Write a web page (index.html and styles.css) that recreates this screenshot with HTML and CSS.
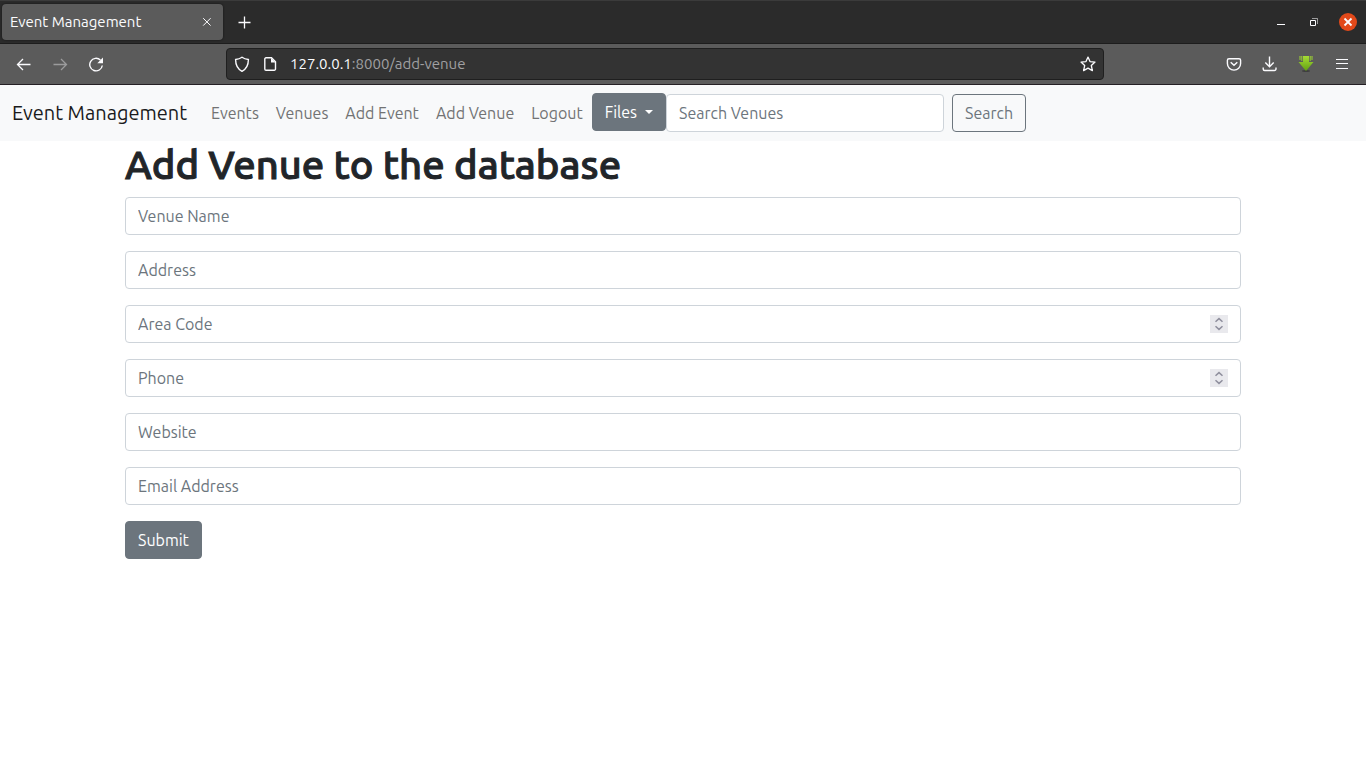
FILE: index.html
```html
<!DOCTYPE html>
<html lang="en">
<head>
<meta charset="utf-8">
<meta name="viewport" content="width=device-width, initial-scale=1">
<title>Event Management</title>
<link rel="stylesheet" href="styles.css">
</head>
<body>
<div class="browser">
  <div class="titlebar">
    <div class="tab">
      <span class="tab-title">Event Management</span>
      <button class="icon-btn tab-close" type="button" aria-label="Close tab">
        <svg width="16" height="16" viewBox="0 0 16 16"><path d="M4.2 4.2l7.4 7.4M11.6 4.2l-7.4 7.4"/></svg>
      </button>
    </div>
    <button class="icon-btn new-tab" type="button" aria-label="New tab">
      <svg width="16" height="16" viewBox="0 0 16 16"><path d="M8.5 2.5v12M2.5 8.5h12" stroke-width="1.300"/></svg>
    </button>
    <div class="window-controls">
      <button class="icon-btn" type="button" aria-label="Minimize">
        <svg width="16" height="16" viewBox="0 0 16 16"><path d="M4 10.5h8"/></svg>
      </button>
      <button class="icon-btn" type="button" aria-label="Restore">
        <svg width="16" height="16" viewBox="0 0 16 16"><path d="M4.5 6.5h5v5h-5z"/><path d="M6 4.5h5.500v5.500" opacity=".55"/></svg>
      </button>
      <button class="icon-btn window-close" type="button" aria-label="Close window">
        <svg width="18" height="18" viewBox="0 0 18 18"><path d="M5.500 5.500l7 7M12.500 5.500l-7 7" stroke-width="1.800"/></svg>
      </button>
    </div>
  </div>

  <div class="toolbar">
    <div class="history">
      <button class="icon-btn" type="button" aria-label="Back">
        <svg width="16" height="16" viewBox="0 0 16 16"><path d="M14.500 8.500H1.800M7 3L1.500 8.500 7 14" stroke-width="1.300"/></svg>
      </button>
      <button class="icon-btn dim" type="button" aria-label="Forward" disabled>
        <svg width="16" height="16" viewBox="0 0 16 16"><path d="M1.500 8.500h12.700M9 3l5.500 5.500L9 14" stroke-width="1.300"/></svg>
      </button>
      <button class="icon-btn" type="button" aria-label="Reload">
        <svg width="16" height="16" viewBox="0 0 16 16"><path d="M14.300 9.500A6.300 6.300 0 1 1 12.400 4" stroke-width="1.400"/><path class="solid" d="M15 1.500v5.800H9.300z"/></svg>
      </button>
    </div>
    <div class="urlbar">
      <svg width="16" height="16" viewBox="0 0 16 16"><path d="M8 1.200c2 1.400 4 2 6.400 2.300 0 5.500-1.600 9.300-6.400 11.800-4.800-2.500-6.400-6.300-6.400-11.800C4 3.200 6 2.600 8 1.200z" stroke-width="1.400"/></svg>
      <svg width="16" height="16" viewBox="0 0 16 16"><path d="M4 1.800h5.500l4 4V13a1.200 1.200 0 0 1-1.200 1.200H4A1.200 1.200 0 0 1 2.800 13V3A1.200 1.200 0 0 1 4 1.800z" stroke-width="1.400"/><path class="solid" d="M9 2v4.500h4.500z"/></svg>
      <div class="url"><span class="host">127.0.0.1</span>:8000/add-venue</div>
      <button class="icon-btn" type="button" aria-label="Bookmark">
        <svg width="16" height="16" viewBox="0 0 16 16"><path d="M8 1.100l2 4.500 5 .5-3.700 3.400 1.100 5.100L8 12.100l-4.400 2.500 1.100-5.100L1 6.100l5-.5z" stroke-width="1.300" stroke-linejoin="round"/></svg>
      </button>
    </div>
    <div class="tools">
      <button class="icon-btn" type="button" aria-label="Save to Pocket">
        <svg width="16" height="16" viewBox="0 0 16 16"><path d="M3 2.700h10A1.600 1.600 0 0 1 14.600 4.300v3.200a6.600 6.600 0 0 1-13.200 0V4.300A1.600 1.600 0 0 1 3 2.700z" stroke-width="1.400"/><path d="M4.700 6.200L8 9.200l3.300-3" stroke-width="1.500"/></svg>
      </button>
      <button class="icon-btn" type="button" aria-label="Downloads">
        <svg width="16" height="16" viewBox="0 0 16 16"><path d="M7.500 .5v10M3.300 6.500l4.200 4.200 4.200-4.200M1.200 11.500v1.500a1.500 1.500 0 0 0 1.500 1.500h9.800a1.500 1.500 0 0 0 1.500-1.500v-1.500" stroke-width="1.400"/></svg>
      </button>
      <button class="icon-btn" type="button" aria-label="Download helper">
        <svg width="16" height="16" viewBox="0 0 16 16">
          <defs><linearGradient id="leaf" x1="0" y1="0" x2="0" y2="1"><stop offset="0" stop-color="#a6dc35"/><stop offset="1" stop-color="#62a012"/></linearGradient></defs>
          <ellipse cx="8" cy="15" rx="4" ry="1" fill="#3f3f3f" stroke="none"/>
          <path d="M5 0h6v6h4.500L8 15 .5 6H5zM1.500 0h1v4h-1zM3.300 0h1v5h-1zM11.700 0h1v5h-1zM13.500 0h1v4h-1z" fill="url(#leaf)" stroke="none"/>
        </svg>
      </button>
      <button class="icon-btn" type="button" aria-label="Menu">
        <svg width="16" height="16" viewBox="0 0 16 16"><path d="M2 3.500h12M2 7.500h12M2 12.500h12" stroke-width="1.200"/></svg>
      </button>
    </div>
  </div>
</div>

<nav class="navbar">
  <a class="brand" href="#">Event Management</a>
  <ul class="nav-list">
    <li><a class="nav-link" href="#">Events</a></li>
    <li><a class="nav-link" href="#">Venues</a></li>
    <li><a class="nav-link" href="#">Add Event</a></li>
    <li><a class="nav-link" href="#">Add Venue</a></li>
    <li><a class="nav-link" href="#">Logout</a></li>
    <li><button class="btn btn-secondary dropdown" type="button" aria-haspopup="true">Files</button></li>
  </ul>
  <form class="search">
    <input class="control" type="search" placeholder="Search Venues" aria-label="Search Venues">
    <button class="btn btn-outline" type="submit">Search</button>
  </form>
</nav>

<main class="container">
  <h1 class="heading">Add Venue to the database</h1>
  <form class="venue-form">
    <input class="control" type="text" placeholder="Venue Name" aria-label="Venue Name">
    <input class="control" type="text" placeholder="Address" aria-label="Address">
    <div class="control number-control">
      <input class="number-input" type="number" placeholder="Area Code" aria-label="Area Code">
      <button class="stepper" type="button" aria-label="Step area code"><svg width="18" height="18" viewBox="0 0 18 18"><path d="M5.500 6.800L9 3.600l3.500 3.200M5.500 11.200L9 14.400l3.500-3.200"/></svg></button>
    </div>
    <div class="control number-control">
      <input class="number-input" type="number" placeholder="Phone" aria-label="Phone">
      <button class="stepper" type="button" aria-label="Step phone"><svg width="18" height="18" viewBox="0 0 18 18"><path d="M5.500 6.800L9 3.600l3.500 3.200M5.500 11.200L9 14.400l3.500-3.200"/></svg></button>
    </div>
    <input class="control" type="url" placeholder="Website" aria-label="Website">
    <input class="control" type="email" placeholder="Email Address" aria-label="Email Address">
    <button class="btn btn-secondary" type="submit">Submit</button>
  </form>
</main>
</body>
</html>
```
FILE: styles.css
```css
*, *::before, *::after { box-sizing: border-box; }

body {
  margin: 0;
  background: #fff;
  color: #212529;
  font: 16px/24px Ubuntu, "Noto Sans", sans-serif;
}

button, input { font: inherit; }

/* Browser frame */
.browser {
  color: #fbfbfe;
  font-size: 15px;
  line-height: 20px;
}

.browser svg {
  display: block;
  flex: none;
  fill: none;
  stroke: #fbfbfe;
  stroke-width: 1;
}

.browser .solid { fill: #fbfbfe; stroke: none; }

.icon-btn {
  display: block;
  padding: 0;
  border: 0;
  background: none;
}

.dim { opacity: .4; }

.titlebar {
  display: flex;
  align-items: center;
  height: 44px;
  padding: 0 9px 0 2px;
  background: #2b2b2b;
  border-top: 1px solid #3b3b3b;
  border-bottom: 1px solid #1d1d1d;
}

.tab {
  display: flex;
  align-items: center;
  justify-content: space-between;
  width: 221px;
  height: 36px;
  padding: 0 8px;
  border-radius: 4px;
  background: #5b5b5b;
  box-shadow: 0 0 2px #111;
}

.new-tab { margin-left: 13px; }

.window-controls {
  display: flex;
  align-items: center;
  gap: 17px;
  margin-left: auto;
}

.window-close { border-radius: 50%; background: #e2491a; }

.toolbar {
  display: flex;
  align-items: center;
  justify-content: space-between;
  height: 41px;
  padding: 0 16px;
  background: #5b5b5b;
  border-bottom: 1px solid #241f24;
}

.history, .tools { display: flex; gap: 20px; }

.urlbar {
  display: flex;
  align-items: center;
  gap: 12px;
  width: 878px;
  height: 32px;
  padding: 0 7px;
  border: 1px solid #1f1f1f;
  border-radius: 4px;
  background: #333;
}

.url { flex: 1; color: #a0a0a2; }
.host { color: #fbfbfe; }

/* Site navigation */
.navbar {
  display: flex;
  align-items: center;
  padding: 8px 12px;
  background: #f8f9fa;
}

.brand {
  margin-right: 16px;
  color: #1a1b1c;
  font-size: 20px;
  line-height: 30px;
  text-decoration: none;
}

.nav-list {
  display: flex;
  gap: 1px;
  margin: 0;
  padding: 0;
  list-style: none;
}

.nav-link {
  display: block;
  padding: 8px;
  color: #727374;
  text-decoration: none;
}

.search { display: flex; gap: 8px; }
.search .control { width: 278px; }

/* Buttons */
.btn {
  display: block;
  padding: 6px 12px;
  border: 1px solid #6c757d;
  border-radius: 4px;
}

.btn-secondary { background: #6c757d; color: #fff; }
.btn-outline { background: transparent; color: #6c757d; }

.dropdown::after {
  content: "";
  display: inline-block;
  margin-left: 8px;
  vertical-align: 4px;
  border-top: 4px solid;
  border-right: 4px solid transparent;
  border-left: 4px solid transparent;
}

/* Form */
.control {
  display: block;
  width: 100%;
  height: 38px;
  padding: 6px 12px;
  border: 1px solid #ced4da;
  border-radius: 4px;
  background: #fff;
  color: #212529;
  appearance: none;
}

::placeholder { color: #6c757d; opacity: 1; }

.container {
  max-width: 1140px;
  margin: 0 auto;
  padding: 0 12px;
}

.heading {
  margin: 0 0 8px;
  font-size: 40px;
  font-weight: 500;
  line-height: 48px;
  -webkit-text-stroke: 1px;
}

.venue-form {
  display: grid;
  justify-items: start;
  gap: 16px;
}

.number-control { display: flex; align-items: center; }

.number-input {
  flex: 1;
  min-width: 0;
  padding: 0;
  border: 0;
  outline: 0;
  background: none;
  appearance: textfield;
}

.stepper {
  padding: 0;
  border: 0;
  background: #e9e9ed;
}

.stepper svg {
  display: block;
  fill: none;
  stroke: #8f8f9d;
  stroke-width: 1.500;
}
```
